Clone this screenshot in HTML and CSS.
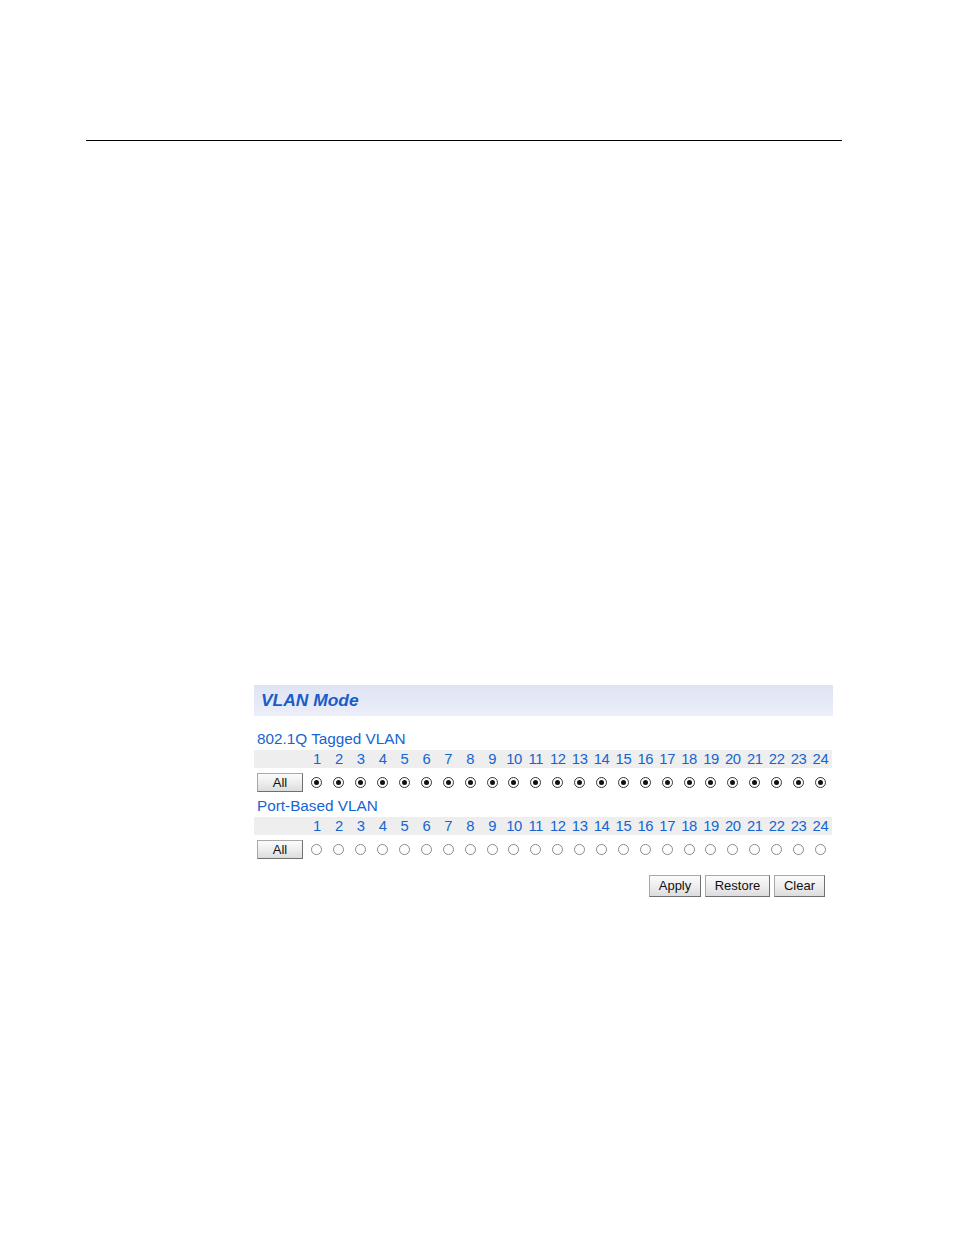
FILE: index.html
```html
<!DOCTYPE html>
<html>
<head>
<meta charset="utf-8">
<link rel="stylesheet" href="styles.css">
</head>
<body>
<div class="page">
  <hr class="rule">
  <div class="panel">
    <div class="header">VLAN Mode</div>
    <div class="section-label first">802.1Q Tagged VLAN</div>
    <div class="grid nums">
      <span class="blank"></span>
      <span>1</span><span>2</span><span>3</span><span>4</span><span>5</span><span>6</span><span>7</span><span>8</span><span>9</span><span>10</span><span>11</span><span>12</span><span>13</span><span>14</span><span>15</span><span>16</span><span>17</span><span>18</span><span>19</span><span>20</span><span>21</span><span>22</span><span>23</span><span>24</span>
    </div>
    <div class="grid radios">
      <span class="cell-btn"><span class="btn all">All</span></span>
      <span class="r on"></span><span class="r on"></span><span class="r on"></span><span class="r on"></span><span class="r on"></span><span class="r on"></span><span class="r on"></span><span class="r on"></span><span class="r on"></span><span class="r on"></span><span class="r on"></span><span class="r on"></span><span class="r on"></span><span class="r on"></span><span class="r on"></span><span class="r on"></span><span class="r on"></span><span class="r on"></span><span class="r on"></span><span class="r on"></span><span class="r on"></span><span class="r on"></span><span class="r on"></span><span class="r on"></span>
    </div>
    <div class="section-label">Port-Based VLAN</div>
    <div class="grid nums">
      <span class="blank"></span>
      <span>1</span><span>2</span><span>3</span><span>4</span><span>5</span><span>6</span><span>7</span><span>8</span><span>9</span><span>10</span><span>11</span><span>12</span><span>13</span><span>14</span><span>15</span><span>16</span><span>17</span><span>18</span><span>19</span><span>20</span><span>21</span><span>22</span><span>23</span><span>24</span>
    </div>
    <div class="grid radios">
      <span class="cell-btn"><span class="btn all">All</span></span>
      <span class="r"></span><span class="r"></span><span class="r"></span><span class="r"></span><span class="r"></span><span class="r"></span><span class="r"></span><span class="r"></span><span class="r"></span><span class="r"></span><span class="r"></span><span class="r"></span><span class="r"></span><span class="r"></span><span class="r"></span><span class="r"></span><span class="r"></span><span class="r"></span><span class="r"></span><span class="r"></span><span class="r"></span><span class="r"></span><span class="r"></span><span class="r"></span>
    </div>
    <div class="actions">
      <span class="btn apply">Apply</span>
      <span class="btn restore">Restore</span>
      <span class="btn clear">Clear</span>
    </div>
  </div>
</div>
</body>
</html>
```

FILE: styles.css
```css
html, body {
  margin: 0;
  padding: 0;
  background: #ffffff;
}
.page {
  width: 954px;
  height: 1235px;
  padding-top: 140px;
  box-sizing: border-box;
  font-family: "Liberation Sans", Arial, sans-serif;
}
.rule {
  margin: 0 0 0 86px;
  width: 756px;
  height: 0;
  border: 0;
  border-top: 1px solid #000;
}
.panel {
  margin: 544px 0 0 254px;
  width: 579px;
}
.header {
  height: 31px;
  background: linear-gradient(to bottom, #dfe4f4 0%, #e6eaf7 60%, #eceff9 100%);
  color: #1a5cc8;
  font-weight: bold;
  font-style: italic;
  font-size: 17.4px;
  line-height: 30px;
  padding-left: 7px;
}
.section-label {
  color: #1565d0;
  font-size: 15.3px;
  height: 19px;
  line-height: 19px;
  padding-left: 3px;
  margin-top: 4px;
}
.section-label.first {
  margin-top: 13px;
}
.grid {
  display: grid;
  grid-template-columns: 52px repeat(24, 21.9px);
  width: 578px;
}
.nums {
  height: 18px;
  background: #eeeeef;
  margin-top: 2px;
  color: #1565d0;
  font-size: 14.8px;
  line-height: 19px;
}
.nums span {
  text-align: center;
  letter-spacing: -0.4px;
}
.radios {
  height: 20px;
  align-items: center;
  margin-top: 4px;
}
.cell-btn {
  padding-left: 3px;
}
.btn {
  display: inline-block;
  box-sizing: border-box;
  background: linear-gradient(to bottom, #fbfbfb 0%, #eeeeee 50%, #dcdcdc 100%);
  border: 1px solid #a8a8a8;
  border-right-color: #707070;
  border-bottom-color: #707070;
  color: #111;
  font-size: 13px;
  text-align: center;
}
.btn.all {
  width: 46px;
  height: 19px;
  line-height: 17px;
}
.r {
  justify-self: center;
  width: 11px;
  height: 11px;
  box-sizing: border-box;
  border-radius: 50%;
  border: 1px solid #8a8a8a;
  background: #fff;
  position: relative;
}
.r.on {
  border-color: #333;
}
.r.on::after {
  content: "";
  position: absolute;
  left: 2px;
  top: 2px;
  width: 5px;
  height: 5px;
  border-radius: 50%;
  background: #111;
}
.actions {
  display: flex;
  justify-content: flex-end;
  gap: 4px;
  margin-top: 16px;
  padding-right: 8px;
}
.actions .btn {
  height: 22px;
  line-height: 20px;
}
.apply { width: 52px; }
.restore { width: 65px; }
.clear { width: 51px; }
```
